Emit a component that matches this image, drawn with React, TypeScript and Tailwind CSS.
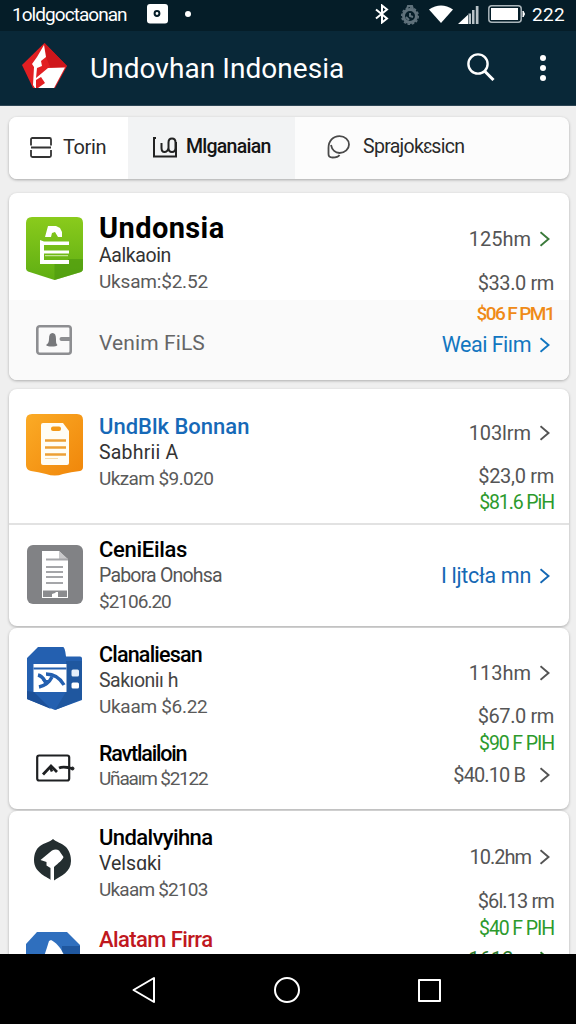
import { ReactNode } from "react";
import clsx from "clsx";

type LineProps = { children: ReactNode; className?: string };

function Title({ children, className }: LineProps) {
  return (
    <p className={clsx("h-[26px] text-[22px] leading-[26px] font-medium whitespace-nowrap", className)}>
      {children}
    </p>
  );
}

function Sub({ children, className }: LineProps) {
  return (
    <p className={clsx("h-[26px] text-[19.5px] leading-[26px] whitespace-nowrap", className)}>
      {children}
    </p>
  );
}

function Meta({ children, className }: LineProps) {
  return (
    <p className={clsx("h-[26px] text-[19px] leading-[26px] whitespace-nowrap text-[#5a5a5a]", className)}>
      {children}
    </p>
  );
}

function Amount({ children, className }: LineProps) {
  return (
    <p className={clsx("h-[26px] text-[20px] leading-[26px] whitespace-nowrap", className)}>
      {children}
    </p>
  );
}

function Chevron({ className }: { className?: string }) {
  return (
    <svg viewBox="0 0 10 16" className={clsx("h-4 w-2.5 shrink-0", className)} fill="none" stroke="currentColor" strokeWidth="2">
      <path d="M.5 1.2 8.5 8 .5 14.8" />
    </svg>
  );
}

function LinkLine({ children, className, chevron }: LineProps & { chevron?: string }) {
  return (
    <div className={clsx("mr-1 flex h-[26px] items-center justify-end gap-[9px] text-[20px] leading-[26px] whitespace-nowrap", className)}>
      <span>{children}</span>
      <Chevron className={chevron} />
    </div>
  );
}

type RowProps = {
  icon: ReactNode;
  left: ReactNode;
  right: ReactNode;
  className?: string;
};

function Row({ icon, left, right, className }: RowProps) {
  return (
    <div className={clsx("flex items-start pr-[15px] pl-[17px]", className)}>
      <div className="flex w-[57px] shrink-0 justify-center">{icon}</div>
      <div className="ml-4 flex-1">{left}</div>
      <div className="flex flex-col items-end">{right}</div>
    </div>
  );
}

function Card({ children, className }: LineProps) {
  return (
    <section className={clsx("shrink-0 overflow-hidden rounded-lg bg-white shadow-[0_1px_3px_rgba(0,0,0,0.28)]", className)}>
      {children}
    </section>
  );
}

function GreenBadge() {
  return (
    <svg viewBox="0 0 57 63" className="mt-6 h-[63px] w-[57px]">
      <defs>
        <linearGradient id="green" x1="0" y1="0" x2="0" y2="1">
          <stop offset="0" stopColor="#8acb1c" />
          <stop offset="1" stopColor="#5fae13" />
        </linearGradient>
      </defs>
      <path d="M6 0h45q6 0 6 6v46q0 2-2 3L28.5 63 2 54.5q-2-1-2-3V6q0-6 6-6z" fill="url(#green)" />
      <path d="M42 42h15v10q0 2-2 3L28.5 63V46H42z" fill="#4d9a10" opacity=".65" />
      <path d="M19 20 22 9h8l4 2 2 4v5h-4l-3-5-3 1-1 4z" fill="#fff" />
      <path d="M14 23l4 1.500h25V28H18v5.500h25v3H18V43h25v4H14z" fill="#fff" />
      <path d="M19 38.700h23" stroke="#d7eeb4" strokeWidth="1" />
    </svg>
  );
}

function OrangeBadge() {
  return (
    <svg viewBox="0 0 57 62" className="mt-[25px] h-[62px] w-[57px]">
      <defs>
        <linearGradient id="orange" x1="0" y1="0" x2="1" y2="1">
          <stop offset="0" stopColor="#fbab26" />
          <stop offset="1" stopColor="#f0860a" />
        </linearGradient>
      </defs>
      <path d="M6 0h45q6 0 6 6v47q0 3-3 4-9 1-17 3-8 3-17 0-8-2-15-3-5-1-5-6V6q0-6 6-6z" fill="url(#orange)" />
      <path d="M17 9h20l6 8v32q0 2-2 2H17q-2 0-2-2V11q0-2 2-2z" fill="#fffdf5" />
      <rect x="25" y="12.500" width="10" height="4.500" rx="2" fill="#f39a1a" />
      <path d="M19 26.500h21M19 33.500h21M19 40.500h21" stroke="#eda035" strokeWidth="2.400" />
      <path d="M19 44.500h13" stroke="#f8dba8" strokeWidth="1.200" />
    </svg>
  );
}

function GrayBadge() {
  return (
    <svg viewBox="0 0 56 59" className="mt-5 h-[59px] w-14">
      <rect width="56" height="59" rx="6" fill="#818285" />
      <path d="M15 6h17l9 9v38H15z" fill="#fff" />
      <path d="M32 6v8h9z" fill="#c9c9cb" />
      <path d="M19 14.500h22M19 22h17M19 27h17M19 32h17M19 38h17" stroke="#a5a6a9" strokeWidth="1.800" />
      <path d="M16 45.500h24v6.500H16z" fill="#8b8c8f" />
      <path d="M25 52v-3l3-1 1-1h2v5z" fill="#fff" />
    </svg>
  );
}

function BlueBadge() {
  return (
    <svg viewBox="0 0 55 63" className="mt-[19px] h-[63px] w-[55px]">
      <path d="M11 0h25q2 0 3 9.500h14q2 0 2 2V53L28 63 0 52V11z" fill="#2460b0" />
      <path d="M0 44 7 45 24 62 0 52z" fill="#1c5099" />
      <path d="M39 14h16v38L28 63l11-18z" fill="#1f579f" />
      <path d="M6.500 17h33v28h-33z" fill="#fff" />
      <path d="M6.500 21.500h33" stroke="#2460b0" strokeWidth="2" />
      <path d="M11 28q4 1 7 6M12 40q9-2 13-10M19 27c9 0 14 4 18 11" stroke="#2460b0" strokeWidth="3.400" fill="none" />
      <path d="M15 33h7l-3 6z" fill="#2460b0" />
      <rect x="44.500" y="22.500" width="7.500" height="7" rx="1.500" fill="#e4effb" />
      <rect x="44.500" y="35.500" width="7.500" height="6" rx="1.500" fill="#fff" />
    </svg>
  );
}

function WalletIcon() {
  return (
    <svg viewBox="0 0 36 30" className="mt-[25px] mr-0.5 h-[30px] w-9">
      <rect x="1.300" y="1.300" width="33.400" height="27.400" rx="2.500" fill="none" stroke="#8d8e91" strokeWidth="2.600" />
      <path d="M10 20c2-1 3-3 3-6 0-4 1-6 3.500-6s3.500 2 3.500 6c0 3 0 5 1.500 6-1 2-10 2-11.500 0z" fill="#77787b" />
      <path d="M25.500 14h9" stroke="#8d8e91" strokeWidth="4" strokeLinecap="round" />
    </svg>
  );
}

function PictureIcon() {
  return (
    <svg viewBox="0 0 39 28" className="mt-[44px] ml-0.5 h-7 w-[39px]" fill="none" stroke="#1e2022">
      <rect x="1.200" y="1.500" width="32" height="25" rx="2" strokeWidth="2.200" />
      <path d="M7 20.500 15 12l6 6" strokeWidth="2.800" />
      <path d="M14 12.500l2 5" strokeWidth="2.600" />
      <path d="M23 14c3-1.500 6-1 9-.5l4 1" strokeWidth="2.800" />
      <circle cx="36.500" cy="14.500" r="1.500" fill="#1e2022" />
    </svg>
  );
}

function LeafIcon() {
  return (
    <svg viewBox="0 0 37 42" className="mt-7 mr-1 h-[42px] w-[37px]">
      <path d="M19 0c3 3 9 4 13 8 4 5 5 9 5 14 0 11-10 15-17 19.500h-2C11 37 0 33 0 21 0 15 2 10 6 7 10 4 16 3 19 0z" fill="#242e30" />
      <path d="M6.500 21 18 11.500q4-2 7 0l4.500 6.500c-1 3-5 6-9.500 10v14h-3.500V29l-4-2.500V23z" fill="#fff" />
    </svg>
  );
}

function SailBadge() {
  return (
    <svg viewBox="0 0 54 60" className="mt-[51px] mr-[3px] h-[60px] w-[54px]">
      <path d="M11 0h30l13 13v47H0V12z" fill="#2f6fbe" />
      <path d="M36 14h18v46H36z" fill="#1f579f" />
      <path d="M17 28l6-19 2-1c6 3 11 9 15 20z" fill="#fff" />
    </svg>
  );
}

function StatusBar() {
  return (
    <div className="flex h-[31px] items-center bg-[#051d28] pl-3 text-white">
      <span className="w-[115px] text-[19px] tracking-[-0.05em] whitespace-nowrap">1oldgoctaonan</span>
      <svg viewBox="0 0 22 20" className="mt-[-3px] ml-5 h-5 w-[22px]">
        <rect width="21" height="19.500" rx="3" fill="#fff" />
        <circle cx="10" cy="9.500" r="2.400" fill="#fff" stroke="#051d28" strokeWidth="2" />
      </svg>
      <span className="mt-[-3px] ml-4 size-1.5 rounded-full bg-white" />
      <svg viewBox="0 0 14 20" className="mt-[-3px] ml-[184px] h-5 w-3.5 shrink-0" fill="none" stroke="#fff" strokeWidth="2">
        <path d="M1 5.500 12 14.500 7 18.500V1.500l5 4L1 14.500" />
      </svg>
      <svg viewBox="0 0 20 20" className="mt-[-2px] ml-[11px] size-5 shrink-0" fill="none" stroke="#5f717b">
        <circle cx="10" cy="11" r="6.500" strokeWidth="3" />
        <circle cx="10" cy="11" r="8.300" strokeWidth="1.500" strokeDasharray="2.500 1.800" />
        <path d="M7 4l1-3h4l1 3M10 8v3l3 1M6 12l3 3" strokeWidth="2" />
      </svg>
      <svg viewBox="0 0 24 18" className="mt-[-3px] ml-[9px] h-[18px] w-6 shrink-0">
        <path d="M0 4.500Q12-3.500 24 4.500L12 18z" fill="#fff" />
      </svg>
      <svg viewBox="0 0 21 19" className="mt-[-3px] ml-[5px] h-[19px] w-[21px] shrink-0">
        <path d="M0 19 10 9.800V19z" fill="#fff" />
        <path d="M10.500 8.500h2.500V19h-2.500zM14 5h2.500v14H14zM17.800 1h2.700v18h-2.700z" fill="#b8c2c7" />
      </svg>
      <svg viewBox="0 0 38 18" className="mt-[-3px] ml-[9px] h-[18px] w-[38px] shrink-0">
        <rect x=".8" y=".8" width="32.400" height="16.400" rx="3" fill="none" stroke="#aab5ba" strokeWidth="1.500" />
        <rect x="3" y="3" width="27" height="12" fill="#fff" />
        <path d="M35 6q3 3 0 6z" fill="#fff" stroke="#fff" />
      </svg>
      <span className="ml-[6px] text-[19px] tracking-[0.02em]">222</span>
    </div>
  );
}

function AppBar() {
  return (
    <header className="flex h-[75px] items-center border-b border-[#2d4655] bg-[#092838] text-white">
      <svg viewBox="0 0 46 46" className="mt-[-5px] ml-[22px] h-[46px] w-[46px]">
        <path d="M22.500 0 45 23 33 45H11L0 22z" fill="#e21f22" />
        <path d="M22.500 0 45 23 29 26 24 14z" fill="#cf161b" />
        <path d="M22 2 24 14 19 18l1 5-5 2-1 10 12-10 17-.500L32 45H13L11 42l1-18-2-3 5-7z" fill="#fff" />
        <path d="M14 45V37l5-3 4 6-7 5z" fill="#e21f22" />
      </svg>
      <h1 className="mt-px ml-[22px] text-[28px] leading-8 tracking-[0.05px] whitespace-nowrap">Undovhan Indonesia</h1>
      <svg viewBox="0 0 28 28" className="mt-[-2px] ml-[123px] size-7 shrink-0" fill="none" stroke="#fff" strokeWidth="2.400">
        <circle cx="11" cy="11" r="9.600" />
        <path d="M17.500 18 26.500 27" strokeWidth="3" />
      </svg>
      <div className="ml-[45px] flex flex-col gap-1">
        <span className="size-1.5 rounded-full bg-white" />
        <span className="size-1.5 rounded-full bg-white" />
        <span className="size-1.5 rounded-full bg-white" />
      </div>
    </header>
  );
}

function Tabs() {
  return (
    <nav className="mr-[7px] ml-[9px] flex h-[62px] shrink-0 overflow-hidden rounded-lg bg-[#fcfcfc] text-[20px] text-[#2a2a2a] shadow-[0_1px_3px_rgba(0,0,0,0.3)]">
      <div className="flex w-[119px] items-center bg-white pb-0.5 pl-[21px]">
        <svg viewBox="0 0 22 21" className="h-[21px] w-[22px]" fill="none" stroke="#333" strokeWidth="1.800">
          <path d="M1 8.500v-6Q1 1 2.500 1h17Q21 1 21 2.500v6M1 13v5.500Q1 20 2.500 20h17q1.500 0 1.500-1.500V13M1 10.500h20" />
        </svg>
        <span className="ml-[11px] tracking-[-0.4px]">Torin</span>
      </div>
      <div className="flex w-[167px] items-center bg-[#f2f3f4] pb-0.5 pl-[25px] text-[#151515]">
        <svg viewBox="0 0 24 21" className="h-[21px] w-6 shrink-0" fill="none" stroke="#222" strokeWidth="2">
          <path d="M3 1H1v18.500h22V5" />
          <path d="M8.500 6v5q0 4 3 4t4-4V5.500q0-4 3.500-4t3.500 4V11q0 4-3.500 4t-3.500-4" />
        </svg>
        <span className="ml-[9px] text-[19.5px] font-medium tracking-[-0.75px]">Mlganaian</span>
      </div>
      <div className="flex items-center pb-0.5 pl-8">
        <svg viewBox="0 0 24 24" className="size-6" fill="none" stroke="#4a4a4a" strokeWidth="1.800">
          <path d="M4 10c1 5 4.500 8 8.500 8 5.500 0 9.500-4 9.500-8.500S18 1.200 12.500 1.200C6 1.200 1.500 6 1.500 13v6q0 3.500 4 3.500c3 0 5.500 0 7-2.500" />
        </svg>
        <span className="ml-3 text-[19.5px] tracking-[-0.7px]">Sprajokɛsicn</span>
      </div>
    </nav>
  );
}

function NavBar() {
  return (
    <footer className="flex h-[70px] shrink-0 items-center bg-black pt-0.5 pl-[132px]">
      <svg viewBox="0 0 24 28" className="h-7 w-6" fill="none" stroke="#fff" strokeWidth="2" strokeLinejoin="round">
        <path d="M22 2v24L1.500 14z" />
      </svg>
      <svg viewBox="0 0 28 28" className="ml-[117px] size-7" fill="none" stroke="#fff" strokeWidth="2">
        <circle cx="14" cy="14" r="12" />
      </svg>
      <span className="ml-[117px] size-[23px] rounded-[1px] border-2 border-white" />
    </footer>
  );
}

export default function App() {
  return (
    <div className="flex h-[1024px] w-[576px] flex-col overflow-hidden bg-[#efefef] font-['Roboto','Liberation_Sans',sans-serif]">
      <StatusBar />
      <AppBar />
      <main className="flex min-h-0 flex-1 flex-col overflow-hidden pt-[11px]">
        <Tabs />

        <div className="mt-3.5 mr-[7px] ml-[9px] flex flex-col">
          <Card className="h-[187px]">
            <Row
              className="h-[107px]"
              icon={<GreenBadge />}
              left={
                <>
                  <p className="mt-[21px] h-7 text-[29px] leading-7 font-bold tracking-[0.4px] text-black">Undonsia</p>
                  <Sub className="mt-px tracking-[-0.4px] text-[#333]">Aalkaoin</Sub>
                  <Meta className="tracking-[-0.2px]">Uksam:$2.52</Meta>
                </>
              }
              right={
                <>
                  <LinkLine className="mt-[33px] text-[#555]" chevron="text-[#3b7a3b]">125hm</LinkLine>
                  <Amount className="mt-[18px] tracking-[-0.4px] text-[#555]">$33.0 rm</Amount>
                </>
              }
            />
            <Row
              className="h-20 bg-[#fafafa]"
              icon={<WalletIcon />}
              left={<p className="mt-[30px] h-[26px] text-[21px] leading-[26px] tracking-[0.1px] text-[#666]">Venim FiLS</p>}
              right={
                <>
                  <Amount className="mt-px text-[19px]! font-medium tracking-[-1.6px] text-[#ef8a17]">$06 F PM1</Amount>
                  <LinkLine className="mt-[5px] text-[21.5px]! tracking-[-0.5px] text-[#1276c0]">Weai Fiım</LinkLine>
                </>
              }
            />
          </Card>

          <Card className="mt-[9px] h-[237px]">
            <Row
              className="h-[136px] border-b-2 border-[#e2e2e2]"
              icon={<OrangeBadge />}
              left={
                <>
                  <Title className="mt-[25px] text-[#1669b7]">UndBlk Bonnan</Title>
                  <Sub className="tracking-[0.2px] text-[#333]">Sabhrii A</Sub>
                  <Meta className="tracking-[-0.6px]">Ukzam $9.020</Meta>
                </>
              }
              right={
                <>
                  <LinkLine className="mt-[31px] tracking-[-0.1px] text-[#555]">103lrm</LinkLine>
                  <Amount className="mt-[17px] tracking-[-0.3px] text-[#555]">$23,0 rm</Amount>
                  <Amount className="mt-px text-[19.5px]! tracking-[-1.1px] text-[#2c9a2c]">$81.6 PiH</Amount>
                </>
              }
            />
            <Row
              icon={<GrayBadge />}
              left={
                <>
                  <Title className="mt-3 tracking-[-0.3px] text-black">CeniEilas</Title>
                  <Sub className="tracking-[-0.8px] text-[#555]">Pabora Onohsa</Sub>
                  <Meta className="tracking-[-1px]">$2106.20</Meta>
                </>
              }
              right={<LinkLine className="mt-[38px] text-[21.5px]! tracking-[-0.3px] text-[#1568b4]">I ljtcła mn</LinkLine>}
            />
          </Card>

          <Card className="mt-0.5 h-[181px]">
            <Row
              icon={
                <div className="flex flex-col items-center">
                  <BlueBadge />
                  <PictureIcon />
                </div>
              }
              left={
                <>
                  <Title className="mt-3.5 text-[21.5px]! tracking-[-0.8px] text-black">Clanaliesan</Title>
                  <Sub className="tracking-[-0.5px] text-[#444]">Sakıoniı h</Sub>
                  <Meta className="tracking-[-0.3px]">Ukaam $6.22</Meta>
                  <Title className="mt-[21px] text-[21.5px]! tracking-[-1.2px] text-black">Ravtlailoin</Title>
                  <Meta className="-mt-px tracking-[-1.2px]">Uñaaım $2122</Meta>
                </>
              }
              right={
                <>
                  <LinkLine className="mt-8 text-[#555]">113hm</LinkLine>
                  <Amount className="mt-[17px] tracking-[-0.4px] text-[#555]">$67.0 rm</Amount>
                  <Amount className="mt-0.5 text-[19.5px]! tracking-[-1.1px] text-[#2c9a2c]">$90 F PIH</Amount>
                  <LinkLine className="mt-[5px] gap-[15px]! tracking-[-0.9px] text-[#555]">$40.10 B</LinkLine>
                </>
              }
            />
          </Card>

          <Card className="mt-0.5 h-[220px]">
            <Row
              icon={
                <div className="flex flex-col items-center">
                  <LeafIcon />
                  <SailBadge />
                </div>
              }
              left={
                <>
                  <Title className="mt-3.5 tracking-[-0.6px] text-black">Undalvyihna</Title>
                  <Sub className="text-[#333]">Velsɑki</Sub>
                  <Meta className="tracking-[-0.8px]">Ukaam $2103</Meta>
                  <Title className="mt-6 tracking-[-0.6px] text-[#c0181e]">Alatam Firra</Title>
                  <Sub className="-mt-0.5 text-[#c0181e]">Sakam</Sub>
                </>
              }
              right={
                <>
                  <LinkLine className="mt-[33px] tracking-[-1px] text-[#555]">10.2hm</LinkLine>
                  <Amount className="mt-[18px] tracking-[-0.9px] text-[#555]">$6l.13 rm</Amount>
                  <Amount className="mt-0.5 text-[19.5px]! tracking-[-1.1px] text-[#2c9a2c]">$40 F PIH</Amount>
                  <LinkLine className="mt-1 text-[#2c7a2c]">1612m</LinkLine>
                </>
              }
            />
          </Card>
        </div>
      </main>
      <NavBar />
    </div>
  );
}
